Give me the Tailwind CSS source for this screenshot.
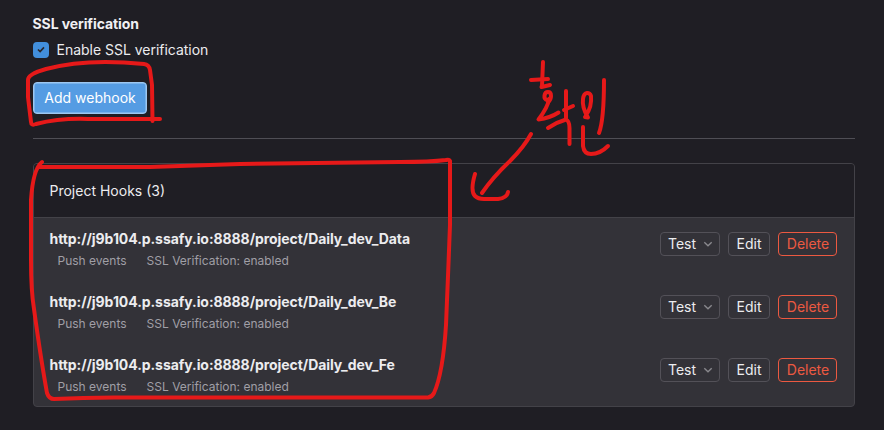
<!DOCTYPE html>
<html lang="en">
<head>
<meta charset="utf-8">
<title>Webhooks</title>
<script src="https://cdn.jsdelivr.net/npm/@tailwindcss/browser@4"></script>
</head>
<body class="relative h-[430px] w-[884px] overflow-hidden bg-[#1f1e24] pl-[33px] pr-[29px] pt-[14px] font-['Inter',sans-serif] text-sm leading-5 text-[#ececef] whitespace-nowrap">
  <h2 class="-ml-[0.5px] font-[650] tracking-[-0.1px] text-[#f0f0f3]">SSL verification</h2>
  <label class="mt-1.5 flex items-center gap-[7.5px]">
    <span class="flex size-4 items-center justify-center rounded-[4px] bg-[#428fdc]">
      <svg class="size-4" viewBox="0 0 16 16" fill="none" stroke="#28272d" stroke-width="1.7"><path d="M5 7.5 7.1 9.5 11 5.3"/></svg>
    </span>
    <span class="tracking-[-0.02px]">Enable SSL verification</span>
  </label>
  <button class="mt-[22px] flex h-8 w-[114px] items-center justify-center rounded-[4px] border border-[#9dc7f1] bg-[#559ce3] text-white shadow-[inset_0_0_0_0.5px_#9dc7f1]">Add webhook</button>
  <hr class="mt-6 border-[#4f4e55]">
  <section class="mt-6 h-[244px] overflow-hidden rounded-[4px] border border-[#434248] bg-[#333238]">
    <h3 class="flex h-[54px] items-center border-b border-[#434248] bg-[#1f1e24] pl-[15.5px]">Project Hooks (3)</h3>
    <ul>
      <li class="flex h-[63px] items-start justify-between pl-[15.5px] pr-[17px] pt-[11px]">
        <div>
          <p class="font-[650] tracking-[-0.07px]">http://j9b104.p.ssafy.io:8888/project/Daily_dev_Data</p>
          <p class="mt-[3px] flex gap-5 pl-2 text-xs leading-[18px] text-[#a09fa6]"><span>Push events</span><span>SSL Verification: enabled</span></p>
        </div>
        <div class="mt-[3px] flex gap-2">
          <button class="flex h-6 w-[60px] items-center justify-between rounded-[4px] border border-[#535158] pl-[7px] pr-[5px]">Test<svg class="size-3" viewBox="0 0 12 12" fill="none" stroke="#89888d" stroke-width="1.4"><path d="m2.3 4.2 3.7 3.6 3.7-3.6"/></svg></button>
          <button class="flex h-6 w-[42px] items-center justify-center rounded-[4px] border border-[#535158]">Edit</button>
          <button class="flex h-6 w-[59px] items-center justify-center rounded-[4px] border border-[#ec5941] pl-px text-[#ec5941]">Delete</button>
        </div>
      </li>
      <li class="flex h-[63px] items-start justify-between pl-[15.5px] pr-[17px] pt-[11px]">
        <div>
          <p class="font-[650] tracking-[-0.07px]">http://j9b104.p.ssafy.io:8888/project/Daily_dev_Be</p>
          <p class="mt-[3px] flex gap-5 pl-2 text-xs leading-[18px] text-[#a09fa6]"><span>Push events</span><span>SSL Verification: enabled</span></p>
        </div>
        <div class="mt-[3px] flex gap-2">
          <button class="flex h-6 w-[60px] items-center justify-between rounded-[4px] border border-[#535158] pl-[7px] pr-[5px]">Test<svg class="size-3" viewBox="0 0 12 12" fill="none" stroke="#89888d" stroke-width="1.4"><path d="m2.3 4.2 3.7 3.6 3.7-3.6"/></svg></button>
          <button class="flex h-6 w-[42px] items-center justify-center rounded-[4px] border border-[#535158]">Edit</button>
          <button class="flex h-6 w-[59px] items-center justify-center rounded-[4px] border border-[#ec5941] pl-px text-[#ec5941]">Delete</button>
        </div>
      </li>
      <li class="flex h-[63px] items-start justify-between pl-[15.5px] pr-[17px] pt-[11px]">
        <div>
          <p class="font-[650] tracking-[-0.07px]">http://j9b104.p.ssafy.io:8888/project/Daily_dev_Fe</p>
          <p class="mt-[3px] flex gap-5 pl-2 text-xs leading-[18px] text-[#a09fa6]"><span>Push events</span><span>SSL Verification: enabled</span></p>
        </div>
        <div class="mt-[3px] flex gap-2">
          <button class="flex h-6 w-[60px] items-center justify-between rounded-[4px] border border-[#535158] pl-[7px] pr-[5px]">Test<svg class="size-3" viewBox="0 0 12 12" fill="none" stroke="#89888d" stroke-width="1.4"><path d="m2.3 4.2 3.7 3.6 3.7-3.6"/></svg></button>
          <button class="flex h-6 w-[42px] items-center justify-center rounded-[4px] border border-[#535158]">Edit</button>
          <button class="flex h-6 w-[59px] items-center justify-center rounded-[4px] border border-[#ec5941] pl-px text-[#ec5941]">Delete</button>
        </div>
      </li>
    </ul>
  </section>

  <!-- Hand-drawn marker annotations -->
  <svg class="pointer-events-none absolute inset-0" width="884" height="430" viewBox="0 0 884 430" fill="none" stroke="#e61919" stroke-width="4" stroke-linecap="round" stroke-linejoin="round">
    <!-- box around the button -->
    <path d="M152.500 121 152 85 150 70Q149 64.500 144 64Q86 58 46 69Q28 74 28 80L28 97 31 122Q31 126 36 124Q60 118 88 119L160 119"/>
    <!-- box around the hook list -->
    <path d="M42 162Q33 169 31 200L31 260Q31 291 34 309Q41 360 47 393Q49 399 54 399Q90 397 130 397.500L428 397.500Q432 397 434 393Q443 373 446 325L448 276 450 225 450 161Q449 159 446 160Q430 162 400 162L240 164 150 167 40 167"/>
    <!-- arrow -->
    <path d="M531 134Q524 147 510 161Q493 177 482 193"/>
    <path d="M475 174Q470 191 475 196Q478 199 484 199L498 199Q507 198 508 192"/>
    <!-- handwritten note -->
    <path d="M543 62 542 86"/>
    <path d="M531 80 548 79"/>
    <path d="M541.500 87 550 85"/>
    <path d="M547 100C543 99 544 92 548 92C552 92 552 99 548 102"/>
    <path d="M549 99Q548 107 538.500 119.500Q550 118 558.500 112.500"/>
    <path d="M566 91 566 118"/>
    <path d="M564 110 573 106"/>
    <path d="M548 128Q557 122 566 119.500Q569.500 121 569.500 128L569.500 144"/>
    <path d="M585 117 588 117.500C584 111 582 106 583 99C584 91 590 92 591 96Q592 107 586 115"/>
    <path d="M604 80Q604 120 599 133"/>
    <path d="M583 127 583 146Q584 154 591 154Q600 154 608 146"/>
  </svg>
</body>
</html>
